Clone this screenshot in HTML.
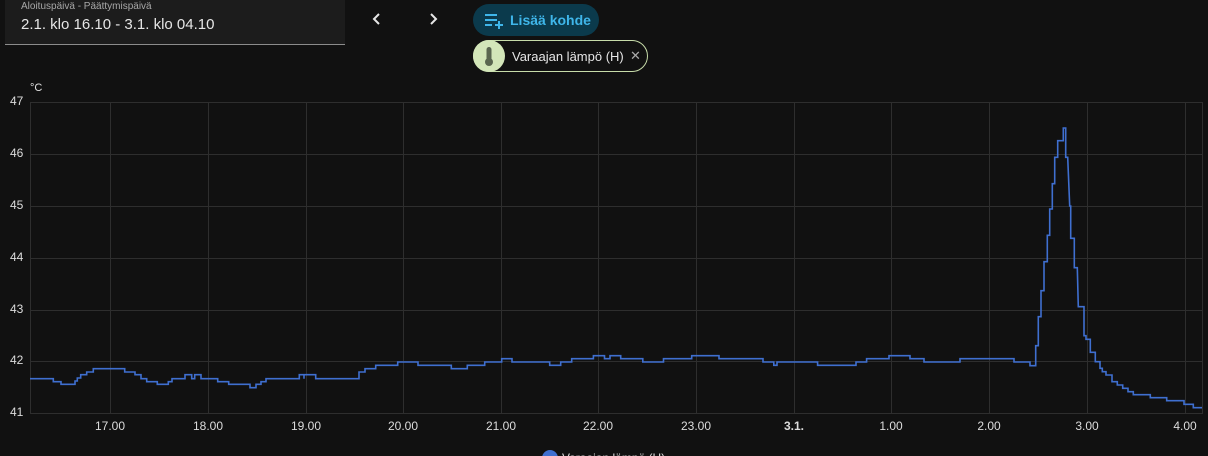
<!DOCTYPE html>
<html><head><meta charset="utf-8"><style>
body{margin:0;width:1208px;height:456px;background:#111111;overflow:hidden;font-family:"Liberation Sans",sans-serif;position:relative;color:#e1e1e1}
.df{position:absolute;left:5px;top:0;width:340px;height:44px;background:#1c1c1c;border-bottom:1px solid #8c8c8c}
.df .l{position:absolute;left:16px;top:1px;font-size:10px;color:#a8a8a8}
.df .v{position:absolute;left:16px;top:16px;font-size:15px;color:#e6e6e6}
.btn{position:absolute;left:473px;top:4px;width:126px;height:32px;border-radius:16px;background:#0b3a4c;color:#3fb6ea;font-size:14px;font-weight:bold}
.chip{position:absolute;left:473px;top:40px;width:173px;height:30px;border-radius:16px;border:1px solid #c7dcaa;box-sizing:content-box}
.chip .ic{position:absolute;left:-1px;top:-1px;width:32px;height:32px;border-radius:16px;background:#d3e6b9}
.chip .t{position:absolute;left:38px;top:8px;font-size:13px;color:#e6e6e6}
.chip .x{position:absolute;left:156px;top:7px;font-size:13px;color:#aaa}
.yl{position:absolute;left:10px;font-size:12px;color:#dcdcdc}
.xl{position:absolute;top:419px;font-size:12px;color:#dcdcdc;width:60px;text-align:center}
</style></head><body>
<div class="df"><div class="l">Aloituspäivä - Päättymispäivä</div><div class="v">2.1. klo 16.10 - 3.1. klo 04.10</div></div>
<svg style="position:absolute;left:370px;top:12px" width="14" height="14"><path d="M9 2 L4 7 L9 12" stroke="#e6e6e6" stroke-width="2" fill="none"/></svg>
<svg style="position:absolute;left:426px;top:12px" width="14" height="14"><path d="M5 2 L10 7 L5 12" stroke="#e6e6e6" stroke-width="2" fill="none"/></svg>
<div class="btn"><svg style="position:absolute;left:11px;top:9px" width="20" height="16"><path d="M1 2H13M1 7H13M1 12H8M11 12H19M15 8V16" stroke="#3fb6ea" stroke-width="2" fill="none"/></svg><span style="position:absolute;left:37px;top:8px">Lisää kohde</span></div>
<div class="chip"><div class="ic"><svg width="32" height="32"><rect x="13.5" y="7" width="5" height="14" rx="2.5" fill="#5a6650"/><circle cx="16" cy="22" r="4" fill="#5a6650"/></svg></div><div class="t">Varaajan lämpö (H)</div><div class="x">✕</div></div>
<div style="position:absolute;left:30px;top:82px;font-size:11px">°C</div>
<svg style="position:absolute;left:0;top:0" width="1208" height="456">
<g stroke="#2e2e2e" stroke-width="1">
<line x1="30" y1="102.5" x2="1202" y2="102.5"/><line x1="30" y1="154.5" x2="1202" y2="154.5"/><line x1="30" y1="206.5" x2="1202" y2="206.5"/><line x1="30" y1="258.5" x2="1202" y2="258.5"/><line x1="30" y1="310.5" x2="1202" y2="310.5"/><line x1="30" y1="361.5" x2="1202" y2="361.5"/><line x1="30" y1="413.5" x2="1202" y2="413.5"/>
<line x1="30.5" y1="102" x2="30.5" y2="414"/><line x1="1202.5" y1="102" x2="1202.5" y2="414"/>
<line x1="110.5" y1="102" x2="110.5" y2="414"/><line x1="208.5" y1="102" x2="208.5" y2="414"/><line x1="306.5" y1="102" x2="306.5" y2="414"/><line x1="403.5" y1="102" x2="403.5" y2="414"/><line x1="501.5" y1="102" x2="501.5" y2="414"/><line x1="598.5" y1="102" x2="598.5" y2="414"/><line x1="696.5" y1="102" x2="696.5" y2="414"/><line x1="794.5" y1="102" x2="794.5" y2="414"/><line x1="891.5" y1="102" x2="891.5" y2="414"/><line x1="989.5" y1="102" x2="989.5" y2="414"/><line x1="1087.5" y1="102" x2="1087.5" y2="414"/><line x1="1185.5" y1="102" x2="1185.5" y2="414"/>
</g>
<path fill="none" stroke="#3f6fd0" stroke-width="1.6" d="M30 378.7H53.3V381.7H61V384.3H75V381H77.3V378H80.7V374.7H86.7V372H93.3V368.7H124.7V372H135V374.7H141V378.7H146.7V381.7H157.3V384.3H168.3V381.7H172V378.7H185V374.7H191.7V378.7H194.7V374.7H201V378.7H217.7V381.7H228.7V384.3H250V387.7H256V384.3H261V381.7H266V378.7H299.3V374.7H304V378.7V374.7H315.7V378.7H359V372H365V368.7H375.7V365.3H397.7V362H418V365.3H451.3V368.7H467.3V365.3H484.7V362H501.7V358.7H512V362H549.7V365.3H560.7V362H571.7V358.7H593.4V355.7H604.5V358.7H610V355.7H620.7V358.7H642.8V362H663.5V358.7H691.7V355.7H719V358.7H763V362H773.8V365.3H777V362H817.6V365.3H856V362H866.6V358.7H889V355.7H910V358.7H924V362H960V358.7H1014V362H1030V365.7H1035.7V345.7H1038.3V316.7H1041V290.7H1044V261.7H1047.3V235.3H1049.7V209H1052.3V183.7H1054.7V157.3H1057.7V140.7H1063.3V128H1065.7V157.3H1067.7L1069.7 206H1070.7V238.3H1074.3V267.7H1077.3L1078.3 306.7H1084V335.7H1086V339.3H1090.3V352.3H1095.3V361.7H1100V368.3H1102.3V371.7H1106V375H1112V381.7H1117.3V385H1122.7V388.3H1128V391.7H1133.3V394.7H1150.3V397.7H1166.7V400.7H1184V404.3H1193.3V407.7H1202"/>
<circle cx="550" cy="458" r="8" fill="#3f6fd0"/>
<text x="562" y="462" font-size="12" fill="#dcdcdc" font-family="Liberation Sans, sans-serif">Varaajan lämpö (H)</text>
</svg>
<div class="yl" style="top:94px">47</div><div class="yl" style="top:146px">46</div><div class="yl" style="top:198px">45</div><div class="yl" style="top:250px">44</div><div class="yl" style="top:302px">43</div><div class="yl" style="top:353px">42</div><div class="yl" style="top:405px">41</div>
<div class="xl" style="left:80px">17.00</div><div class="xl" style="left:178px">18.00</div><div class="xl" style="left:276px">19.00</div><div class="xl" style="left:373px">20.00</div><div class="xl" style="left:471px">21.00</div><div class="xl" style="left:568px">22.00</div><div class="xl" style="left:666px">23.00</div><div class="xl" style="left:764px;font-weight:bold">3.1.</div><div class="xl" style="left:861px">1.00</div><div class="xl" style="left:959px">2.00</div><div class="xl" style="left:1057px">3.00</div><div class="xl" style="left:1155px">4.00</div>
</body></html>
